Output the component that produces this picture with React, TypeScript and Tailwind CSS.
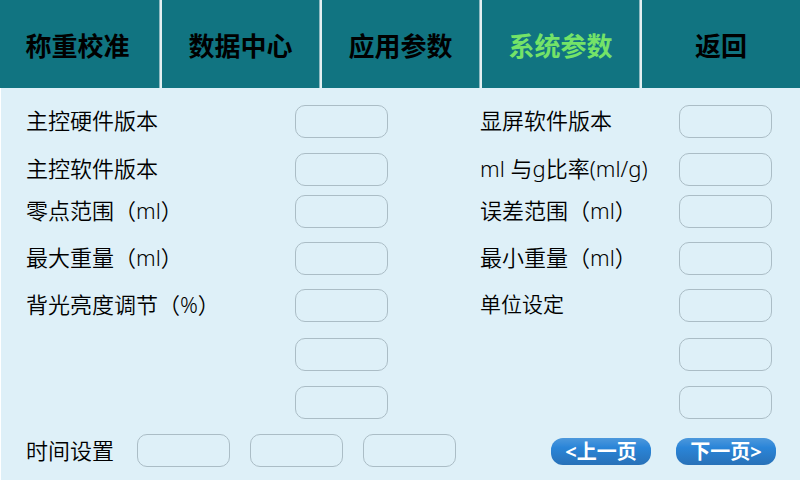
import { useId } from "react";

const tabs = ["称重校准", "数据中心", "应用参数", "系统参数", "返回"];
const activeTab = "系统参数";

type Field = { label: string; hidden?: boolean; plain?: boolean };

const fields: Field[] = [
  { label: "主控硬件版本" },
  { label: "显屏软件版本" },
  { label: "主控软件版本" },
  { label: "ml 与g比率(ml/g)" },
  { label: "零点范围（ml）" },
  { label: "误差范围（ml）" },
  { label: "最大重量（ml）" },
  { label: "最小重量（ml）" },
  { label: "背光亮度调节（%）" },
  { label: "单位设定", plain: true },
  { label: "备用参数 1", hidden: true },
  { label: "备用参数 2", hidden: true },
  { label: "备用参数 3", hidden: true },
  { label: "备用参数 4", hidden: true },
];

const boxClass =
  "h-[33px] w-[93px] rounded-[10px] border border-[#abbdc6] bg-transparent px-2 text-center text-base outline-none focus:border-[#117481]";

function FieldRow({ label, hidden, plain }: Field) {
  const id = useId();
  return (
    <>
      {hidden ? (
        <span />
      ) : (
        <label
          htmlFor={id}
          className={
            plain
              ? "whitespace-nowrap text-[21px] leading-[31px] font-[350]"
              : "whitespace-nowrap text-[22px] leading-[31px] font-[350]"
          }
        >
          {label}
        </label>
      )}
      <input id={id} type="text" aria-label={hidden ? label : undefined} className={boxClass} />
    </>
  );
}

function PageButton({ children }: { children: string }) {
  return (
    <button
      type="button"
      className="h-[27px] w-[100px] rounded-xl bg-linear-to-b from-[#4c98dc] via-[#2a85d8] via-35% to-[#2871b8] text-xl leading-[27px] font-bold whitespace-nowrap text-white"
    >
      {children}
    </button>
  );
}

export default function App() {
  return (
    <div className="flex min-h-screen flex-col bg-[#def0f8] font-['Noto_Sans','Noto_Sans_CJK_SC',sans-serif] text-black">
      <nav className="grid h-[88px] grid-cols-5 bg-[#117481]">
        {tabs.map((tab) => (
          <button
            key={tab}
            type="button"
            aria-current={tab === activeTab ? "page" : undefined}
            className={
              tab === activeTab
                ? "border-r border-l-2 border-r-[#8fbac1] border-l-[#e4f0f2] pt-1 text-[26px] font-bold text-[#74e368]"
                : "border-r border-l-2 border-r-[#8fbac1] border-l-[#e4f0f2] pt-1 text-[26px] font-bold first:border-l-0 first:pr-1 last:border-r-0"
            }
          >
            {tab}
          </button>
        ))}
      </nav>
      <form className="grow border-l border-white pt-[17px] pr-6 pb-[13px] pl-[25px]">
        <div className="mr-1 grid grid-cols-[269fr_185fr_199fr_93fr] grid-rows-[48px_42px_47px_47px_49px_48px_48px] items-start">
          {fields.map((field) => (
            <FieldRow key={field.label} {...field} />
          ))}
        </div>
        <div className="flex items-center justify-between">
          <fieldset className="flex items-center gap-5">
            <legend className="float-left w-[91px] text-[22px] leading-[31px] font-[350] whitespace-nowrap">
              时间设置
            </legend>
            <input type="text" aria-label="时" className={boxClass} />
            <input type="text" aria-label="分" className={boxClass} />
            <input type="text" aria-label="秒" className={boxClass} />
          </fieldset>
          <div className="flex gap-[25px] pt-0.5">
            <PageButton>{"<上一页"}</PageButton>
            <PageButton>{"下一页>"}</PageButton>
          </div>
        </div>
      </form>
    </div>
  );
}
